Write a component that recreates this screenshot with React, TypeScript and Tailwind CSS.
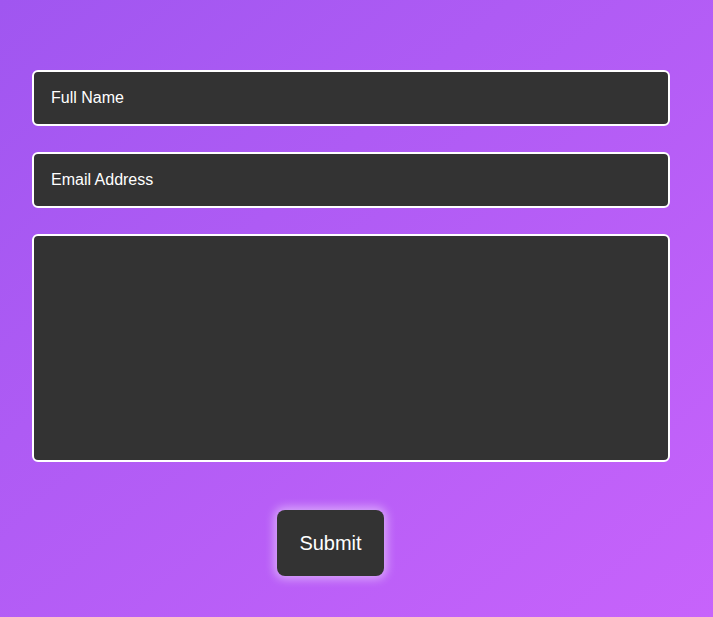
export default function App() {
  return (
    <div className="min-h-screen w-full bg-gradient-to-br from-[#a056f0] to-[#c763fb] font-['Liberation_Sans',Arial,sans-serif]">
      <form
        className="flex flex-col px-[32px] pt-[70px] pb-[41px] w-[702px]"
        onSubmit={(e) => e.preventDefault()}
      >
        <input
          type="text"
          placeholder="Full Name"
          className="h-[56px] w-full rounded-[6px] border-2 border-white bg-[#333333] px-[17px] text-[16px] text-white placeholder:text-white outline-none"
        />
        <input
          type="email"
          placeholder="Email Address"
          className="mt-[26px] h-[56px] w-full rounded-[6px] border-2 border-white bg-[#333333] px-[17px] text-[16px] text-white placeholder:text-white outline-none"
        />
        <textarea className="mt-[26px] h-[228px] w-full resize-none rounded-[6px] border-2 border-white bg-[#333333] px-[17px] py-[14px] text-[16px] text-white outline-none" />
        <button
          type="submit"
          className="mt-[48px] ml-[245px] h-[66px] w-[107px] rounded-[8px] bg-[#333333] text-[20px] text-white shadow-[0_0_10px_3px_rgba(255,255,255,0.45)]"
        >
          Submit
        </button>
      </form>
    </div>
  );
}
